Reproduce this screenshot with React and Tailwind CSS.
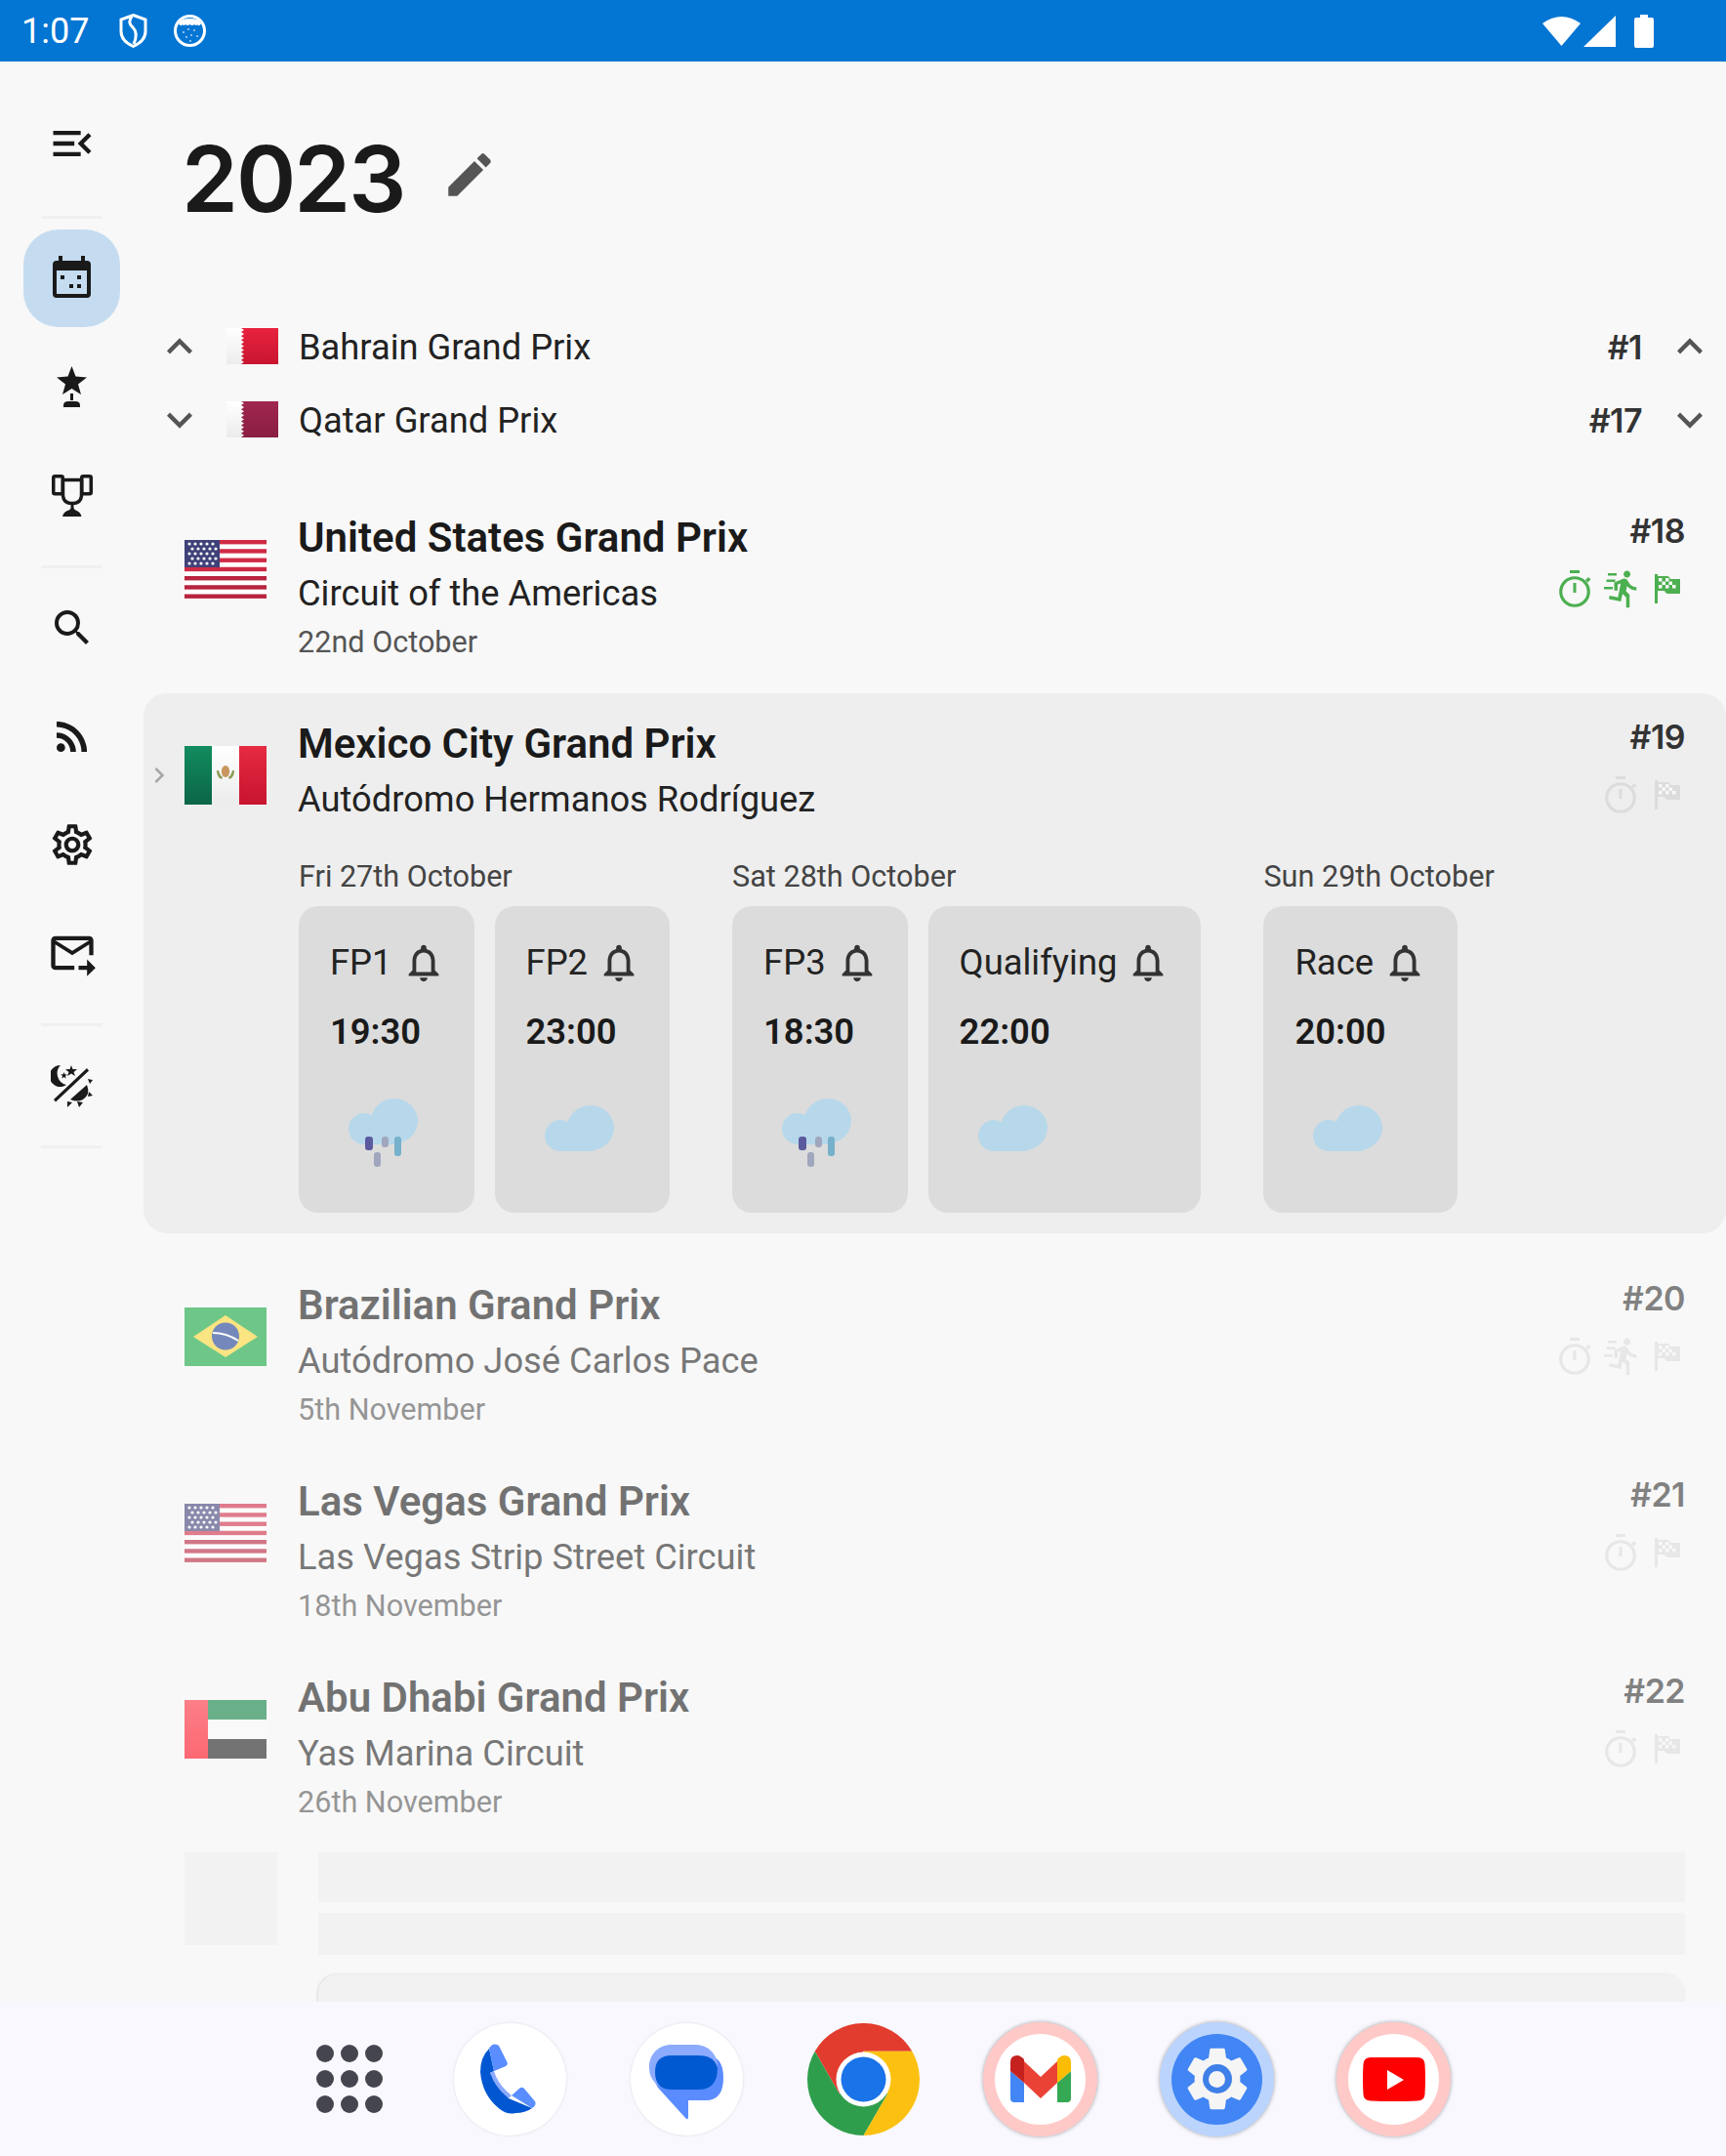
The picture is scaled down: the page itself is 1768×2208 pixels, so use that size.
import React from "react";
import {
  MdMenuOpen, MdEdit, MdExpandLess, MdExpandMore, MdChevronRight, MdSearch, MdRssFeed,
  MdOutlineSettings, MdOutlineForwardToInbox, MdOutlineNotifications, MdDirectionsRun, MdSettings,
} from "react-icons/md";

// --- flags ---
const Sheen = ({ id, from, to }) => (
  <linearGradient id={id} x1="0" y1="0" x2="0" y2="1">
    <stop offset="0" stopColor={from} />
    <stop offset="1" stopColor={to} />
  </linearGradient>
);

const UsFlag = () => (
  <svg viewBox="0 0 84 60" className="block w-[84px] h-[60px]">
    <rect width="84" height="60" fill="#fff" />
    {[0, 1, 2, 3, 4, 5, 6].map((i) => <rect key={i} y={i * 9.25} width="84" height="4.4" fill={i < 4 ? "#cf2a45" : "#b8233d"} />)}
    <rect width="36" height="28" fill="#3f4179" />
    {[4, 9, 14, 19, 24].map((y, r) =>
      [5, 11, 17, 23, 29].map((x) => <circle key={`${x}-${y}`} cx={r % 2 ? x + 3 : x} cy={y} r="1.6" fill="#fff" />)
    )}
  </svg>
);

const PennantFlag = ({ id, top, bottom }) => {
  const pts = ["0,0", "15,0"];
  for (let i = 0; i < 9; i++) pts.push(`18,${i * 4.1 + 2}`, `15,${i * 4.1 + 4.1}`);
  pts.push("0,37");
  return (
    <svg viewBox="0 0 53 37" className="block w-[53px] h-[37px]">
      <defs>
        <Sheen id={id} from={top} to={bottom} />
        <Sheen id={`${id}-w`} from="#ffffff" to="#ececec" />
      </defs>
      <rect width="53" height="37" fill={`url(#${id})`} />
      <polygon points={pts.join(" ")} fill={`url(#${id}-w)`} />
    </svg>
  );
};

const MexicoFlag = () => (
  <svg viewBox="0 0 84 60" className="block w-[84px] h-[60px]">
    <defs>
      <Sheen id="mx-g" from="#128c5e" to="#0b6547" />
      <Sheen id="mx-w" from="#ffffff" to="#ececec" />
      <Sheen id="mx-r" from="#e62a42" to="#c8142e" />
    </defs>
    <rect width="28" height="60" fill="url(#mx-g)" />
    <rect x="28" width="28" height="60" fill="url(#mx-w)" />
    <rect x="56" width="28" height="60" fill="url(#mx-r)" />
    <ellipse cx="42" cy="26" rx="4.2" ry="6" fill="#c8965e" />
    <path d="M33 25q0 7 5 9l1-2q-3-2-4-7zM51 25q0 7-5 9l-1-2q3-2 4-7z" fill="#8c9a56" />
  </svg>
);

const BrazilFlag = () => (
  <svg viewBox="0 0 84 60" className="block w-[84px] h-[60px]">
    <rect width="84" height="60" fill="#14a83f" />
    <polygon points="42,8 75,30 42,51 9,30" fill="#fdd835" />
    <circle cx="42" cy="29.500" r="14" fill="#1e3f95" />
    <path d="M29 26q14 0 26 8" stroke="#fff" strokeWidth="2" fill="none" />
  </svg>
);

const UaeFlag = () => (
  <svg viewBox="0 0 84 60" className="block w-[84px] h-[60px]">
    <defs>
      <Sheen id="ae-r" from="#ff2f3d" to="#ff0a1c" />
    </defs>
    <rect x="24" width="60" height="20" fill="#0b8140" />
    <rect x="24" y="20" width="60" height="20" fill="#fafafa" />
    <rect x="24" y="40" width="60" height="20" fill="#1c1c1c" />
    <rect width="24" height="60" fill="url(#ae-r)" />
  </svg>
);

// --- drawn icons that the packages don't have ---
const CalendarIcon = () => (
  <svg viewBox="0 0 39 43" className="w-[39px] h-[43px] -mt-[3px]" fill="#1a1a1a">
    <path d="M6 0h4v5h19V0h4v5h2a4 4 0 0 1 4 4v30a4 4 0 0 1-4 4H4a4 4 0 0 1-4-4V9a4 4 0 0 1 4-4h2zM4 15v24h31V15z" />
    <rect x="8" y="20" width="4" height="4" />
    <rect x="25" y="20" width="4" height="4" />
    <rect x="17" y="29" width="4" height="4" />
    <rect x="25" y="29" width="4" height="4" />
  </svg>
);

const StarTrophyIcon = () => (
  <svg viewBox="0 0 31 42" className="w-[31px] h-[42px]" fill="#1a1a1a">
    <polygon points="15.5,0 19.5,10.5 31,11.5 22,18.5 25,29 15.5,23 6,29 9,18.5 0,11.5 11.5,10.5" />
    <rect x="14" y="28" width="3" height="7" />
    <path d="M7 42v-2q0-4 5-4h7q5 0 5 4v2z" />
  </svg>
);

const CupIcon = () => (
  <svg viewBox="0 0 42 43" className="w-[42px] h-[43px]">
    <g fill="none" stroke="#1a1a1a" strokeWidth="3.500">
      <rect x="1.750" y="1.750" width="9.500" height="18" rx="1.500" />
      <rect x="30.750" y="1.750" width="9.500" height="18" rx="1.500" />
      <path d="M11 5.500h20M11.500 5.500v15q0 9 9.500 9t9.500-9v-15" />
    </g>
    <path d="M19.500 29h3v5q0 2 3 3 4 1.500 5 6H11q1-4.500 5-6 3.500-1 3.500-3z" fill="#1a1a1a" />
  </svg>
);

const ThemeIcon = () => (
  <svg viewBox="0 0 43 44" className="w-[43px] h-[44px]" fill="#1a1a1a">
    <path d="M10 1a11 11 0 1 0 6 20 12 12 0 0 1-6-20z" />
    <polygon points="21,1 22.5,5 27,5 23.5,8 25,12 21,9.5 17,12 18.5,8 15,5 19.5,5" />
    <polygon points="13.5,8 14.4,10.2 16.8,10.4 15,12 15.6,14.4 13.5,13 11.4,14.4 12,12 10.2,10.4 12.6,10.2" />
    <path d="M3 36 37 4l2 2.4-34 32z" />
    <path d="M20 36 37 21q4 10-4 15-6 3-13 0z" />
    <polygon points="38,15 43,16 40,20" />
    <polygon points="39,28 43,32 38,33" />
    <polygon points="27,38 33,39 29,44" />
    <polygon points="17,38 22,39 17,44" />
  </svg>
);

const TimerIcon = () => (
  <svg viewBox="0 0 34 38" className="w-[34px] h-[38px]" fill="currentColor">
    <rect x="11" y="0" width="10" height="3" />
    <circle cx="16" cy="22" r="14.250" fill="none" stroke="currentColor" strokeWidth="3.200" />
    <rect x="14.500" y="13" width="3" height="10" />
    <path d="M27 10l3-3 2.400 2.400-3 3z" />
  </svg>
);

const SprintIcon = () => (
  <span className="relative flex w-[36px] h-[38px] items-center justify-end">
    <MdDirectionsRun size={42} className="shrink-0 -mr-[6px]" />
    <svg viewBox="0 0 14 24" className="absolute left-0 top-[3px] w-[14px] h-[24px]" fill="currentColor">
      <rect x="4" y="0" width="9" height="2.500" />
      <rect x="2.500" y="6.500" width="9" height="2.500" />
      <rect x="0" y="14" width="9" height="2.500" />
    </svg>
  </span>
);

const FinishFlag = () => (
  <svg viewBox="0 0 26 30" className="w-[26px] h-[30px]">
    <path d="M0 0h3v2h10q2 0 3 3h10v15H13q-2 0-3-3H3v13H0z" fill="currentColor" />
    <g fill="#f8f8f8">
      <rect x="4" y="4" width="3.500" height="3.500" /><rect x="11" y="4" width="3.500" height="3.500" />
      <rect x="7.500" y="7.500" width="3.500" height="3.500" /><rect x="14.500" y="7.500" width="3.500" height="3.500" />
      <rect x="4" y="11" width="3.500" height="3.500" /><rect x="11" y="11" width="3.500" height="3.500" /><rect x="18" y="11" width="3.500" height="3.500" />
    </g>
  </svg>
);

const Cloud = ({ rain }) => (
  <svg viewBox="0 0 72 74" className="block w-[72px] h-[74px] ml-[18px]">
    <g transform={rain ? "" : "translate(0 7)"} fill="#b7d8ea">
      <ellipse cx="48" cy="23" rx="24" ry="23" />
      <circle cx="17" cy="31" r="16" />
      <rect x="17" y="25" width="38" height="22" rx="6" />
    </g>
    {rain && (
      <g>
        <rect x="18" y="39" width="8" height="14" rx="3" fill="#5b5a9f" />
        <rect x="35" y="39" width="7" height="11" rx="3" fill="#a0a6bd" />
        <rect x="48" y="39" width="7" height="20" rx="3" fill="#76b0cb" />
        <rect x="27" y="55" width="7" height="15" rx="3" fill="#a0a6bd" />
      </g>
    )}
  </svg>
);

// --- status bar ---
const StatusBar = () => (
  <div className="h-[63px] shrink-0 bg-[#0375d3] flex items-center pl-[22px] pr-[74px] text-white">
    <span className="text-[36px] leading-none w-[100px]">1:07</span>
    <svg viewBox="0 0 29 35" className="w-[29px] h-[35px]">
      <path d="M14.5 1.5 27 6v12q0 10-12.500 15.500Q2 28 2 18V6z" fill="none" stroke="#fff" strokeWidth="3" />
      <path d="M13 3q-5 6 1 11 6 6 1 17" fill="none" stroke="#fff" strokeWidth="3" />
    </svg>
    <svg viewBox="0 0 33 33" className="w-[33px] h-[33px] ml-[27px]">
      <circle cx="16.500" cy="16.500" r="15" fill="none" stroke="#fff" strokeWidth="3" />
      <path d="M5 9q2-5 11.500-5T28 9q-2 4-4 1-1 2-3 0-2 2-4.500 0Q14 12 12 10q-2 2-3 0-2 3-4-1z" fill="#fff" />
      {[[10, 18], [15, 15], [21, 16], [13, 23], [18, 21], [24, 22], [17, 27]].map(([x, y]) => <circle key={`${x}${y}`} cx={x} cy={y} r="1" fill="#fff" opacity=".7" />)}
    </svg>
    <div className="flex-1" />
    <svg viewBox="0 0 39 31" className="w-[39px] h-[31px]"><path d="M0 8Q19.500-6 39 8L19.500 31z" fill="#fff" /></svg>
    <svg viewBox="0 0 33 32" className="w-[33px] h-[32px] ml-[3px]"><polygon points="33,0 33,32 0,32" fill="#fff" /></svg>
    <svg viewBox="0 0 20 34" className="w-[20px] h-[34px] ml-[19px]"><path d="M6 0h8v3h4a2 2 0 0 1 2 2v27a2 2 0 0 1-2 2H2a2 2 0 0 1-2-2V5a2 2 0 0 1 2-2h4z" fill="#fff" /></svg>
  </div>
);

// --- sidebar ---
const Divider = ({ className = "" }) => <div className={`w-[63px] h-[3px] bg-[#f0f0f0] ${className}`} />;
const NavItem = ({ children, active, className = "" }) => (
  <div className={`w-[99px] h-[100px] shrink-0 flex items-center justify-center rounded-[36px] text-[#1a1a1a] ${active ? "bg-[#c5dcf0]" : ""} ${className}`}>{children}</div>
);

const Sidebar = () => (
  <div className="w-[147px] shrink-0 flex flex-col items-center pt-[34px]">
    <NavItem><MdMenuOpen size={52} /></NavItem>
    <Divider className="mt-[24px]" />
    <NavItem active className="mt-[11px]"><CalendarIcon /></NavItem>
    <NavItem className="mt-[11px]"><StarTrophyIcon /></NavItem>
    <NavItem className="mt-[11px]"><CupIcon /></NavItem>
    <Divider className="mt-[22px]" />
    <NavItem className="mt-[11px]"><MdSearch size={48} /></NavItem>
    <NavItem className="mt-[11px]"><MdRssFeed size={48} /></NavItem>
    <NavItem className="mt-[11px]"><MdOutlineSettings size={50} /></NavItem>
    <NavItem className="mt-[11px]"><MdOutlineForwardToInbox size={52} /></NavItem>
    <Divider className="mt-[22px]" />
    <NavItem className="mt-[11px]"><ThemeIcon /></NavItem>
    <Divider className="mt-[11px]" />
  </div>
);

// --- race rows ---
const numCls = "font-['Inter',sans-serif] font-semibold text-[34px] leading-none text-[#333] tracking-[-0.5px]";

const StatusIcons = ({ sprint, done }) => {
  const col = done ? "text-[#4caf50]" : "text-[#dcdcdc]";
  const cell = "w-[47px] flex justify-center";
  return (
    <div className={`flex items-center justify-end h-[40px] -mr-[5px] ${col}`}>
      <div className={cell}><TimerIcon /></div>
      {sprint && <div className={cell}><SprintIcon /></div>}
      <div className={cell}><FinishFlag /></div>
    </div>
  );
};

const RaceHeader = ({ name, circuit, date, round, flag, sprint, done, lead }) => (
  <div className="flex pr-[42px]">
    <div className="w-[42px] shrink-0 pt-[68px] pr-[10px] flex justify-center text-[#a8a8a8]">{lead}</div>
    <div className="w-[84px] shrink-0 pt-[54px]">{flag}</div>
    <div className="ml-[32px] flex-1 pt-[27px]">
      <div className="text-[42px] leading-[50px] font-semibold text-[#1a1a1a]">{name}</div>
      <div className="text-[36.3px] leading-[50px] mt-[7px] text-[#222]">{circuit}</div>
      {date && <div className="text-[30.6px] leading-[40px] mt-[5px] text-[#555]">{date}</div>}
    </div>
    <div className="pt-[28px]">
      <div className={`${numCls} text-right`}>#{round}</div>
      <div className="mt-[22px]"><StatusIcons sprint={sprint} done={done} /></div>
    </div>
  </div>
);

const Session = ({ label, time, rain, wide }) => (
  <div className={`min-w-[179px] h-[314px] rounded-[20px] bg-[#dcdcdc] pl-[32px] pt-[29px] ${wide ? "pr-[34px]" : "pr-[32px]"}`}>
    <div className="flex items-center h-[58px] text-[36.4px] text-[#222]">
      <span>{label}</span>
      <MdOutlineNotifications size={46} className="ml-[9px] -mr-[3px] text-[#333]" />
    </div>
    <div className="mt-[17px] text-[36.4px] leading-[50px] font-semibold text-[#1a1a1a]">{time}</div>
    <div className="mt-[43px]"><Cloud rain={rain} /></div>
  </div>
);

const days = [
  { day: "Fri 27th October", sessions: [{ label: "FP1", time: "19:30", rain: true }, { label: "FP2", time: "23:00" }] },
  { day: "Sat 28th October", sessions: [{ label: "FP3", time: "18:30", rain: true }, { label: "Qualifying", time: "22:00", wide: true }] },
  { day: "Sun 29th October", sessions: [{ label: "Race", time: "20:00", wide: true }] },
];

const upcoming = [
  { name: "Brazilian Grand Prix", circuit: "Autódromo José Carlos Pace", date: "5th November", round: 20, flag: <BrazilFlag />, sprint: true },
  { name: "Las Vegas Grand Prix", circuit: "Las Vegas Strip Street Circuit", date: "18th November", round: 21, flag: <UsFlag /> },
  { name: "Abu Dhabi Grand Prix", circuit: "Yas Marina Circuit", date: "26th November", round: 22, flag: <UaeFlag /> },
];

const NearbyRow = ({ dir, flag, name, round }) => {
  const Icon = dir === "up" ? MdExpandLess : MdExpandMore;
  return (
    <div className="h-[75px] flex items-center px-[11px]">
      <Icon size={52} className="text-[#555] shrink-0" />
      <div className="ml-[22px] shrink-0">{flag}</div>
      <span className="ml-[21px] pt-[3px] flex-1 text-[36.3px] text-[#222]">{name}</span>
      <span className={`pt-[2px] ${numCls}`}>#{round}</span>
      <Icon size={52} className="text-[#555] ml-[23px] shrink-0" />
    </div>
  );
};

const Dock = () => (
  <div className="h-[158px] shrink-0 bg-[#f8f8fe] flex items-center pl-[324px]">
    <div className="w-[67px] grid grid-cols-3 gap-x-[8px] gap-y-[8px]">
      {[...Array(9).keys()].map((i) => <span key={i} className="size-[18px] rounded-full bg-[#45454f]" />)}
    </div>
    {/* phone */}
    <div className="ml-[74px] size-[115px] rounded-full bg-white shadow-[0_0_3px_rgba(0,0,0,0.12)]">
      <svg viewBox="0 0 115 115">
        <path d="M36 26Q27 35 27 50q2 24 20 38 8 6 16 4 10 0 17-5L56 77 37 51l4-2z" fill="#0057d1" />
        <path d="M37 51l4-2q4 14 18 25l-3 3Q42 66 37 51z" fill="#8aa9ff" />
        <path d="M36 26q3-6 8-4 2 0 3 3l7 14q2 3-1 5l-12 5z" fill="#5a8dff" />
        <path d="M59 74l9-8q2-1 4 1l11 13q2 4-3 7z" fill="#5a8dff" />
      </svg>
    </div>
    {/* messages */}
    <div className="ml-[66px] size-[115px] rounded-full bg-white shadow-[0_0_3px_rgba(0,0,0,0.12)]">
      <svg viewBox="0 0 115 115">
        <path d="M25 58V50q0-17 18-17h34q18 0 18 23t-18 23H59v17q0 3-2 2L28 66q-3-4-3-8z" fill="#5a8cff" />
        <rect x="19" y="22" width="70" height="46" rx="22" fill="#8cabff" />
        <path d="M42 33h27q17 0 20 13 0 22-20 22H42Q25 68 25 50q0-17 17-17z" fill="#0059d1" />
      </svg>
    </div>
    {/* chrome */}
    <div className="ml-[66px] size-[115px]">
      <svg viewBox="0 0 115 115">
        <path d="M107.300 28.750A57.500 57.500 0 0 0 7.700 28.750L32.600 72 57.500 28.750Z" fill="#e23c2e" />
        <path d="M7.700 28.750A57.500 57.500 0 0 0 57.500 115L82.400 72H32.600Z" fill="#2f9e4c" />
        <path d="M57.500 115A57.500 57.500 0 0 0 107.300 28.750H57.500L82.400 72Z" fill="#fcc110" />
        <circle cx="57.500" cy="57.500" r="28" fill="#fff" />
        <circle cx="57.500" cy="57.500" r="23" fill="#1a73e8" />
      </svg>
    </div>
    {/* gmail */}
    <div className="ml-[65px] size-[117px] rounded-full bg-[#ffc9c7] shadow-[0_0_4px_rgba(0,0,0,0.35)] flex items-center justify-center">
      <div className="size-[93px] rounded-full bg-white flex items-center justify-center">
        <svg viewBox="0 0 62 48" className="w-[62px] h-[48px]">
          <path d="M0 16v28q0 4 4 4h10V28z" fill="#4285f4" />
          <path d="M62 16v28q0 4-4 4H48V28z" fill="#34a853" />
          <path d="M14 6v22l17 16 17-16V6L31 22z" fill="#ea4335" />
          <path d="M0 16V7q0-7 7-7 3 0 7 4v24z" fill="#c5221f" />
          <path d="M62 16V7q0-7-7-7-3 0-7 4v24z" fill="#fbbc04" />
        </svg>
      </div>
    </div>
    {/* settings */}
    <div className="ml-[64px] size-[117px] rounded-full bg-[#bbd4fd] shadow-[0_0_4px_rgba(0,0,0,0.35)] flex items-center justify-center">
      <div className="relative size-[93px] rounded-full bg-[#4285f4] flex items-center justify-center">
        <MdSettings size={78} className="text-[#f5f5f5]" />
        <span className="absolute size-[30px] rounded-full bg-[#3f7fe8] flex items-center justify-center">
          <span className="size-[17px] rounded-full bg-[#f5f5f5]" />
        </span>
      </div>
    </div>
    {/* youtube */}
    <div className="ml-[64px] size-[117px] rounded-full bg-[#ffc9c7] shadow-[0_0_4px_rgba(0,0,0,0.35)] flex items-center justify-center">
      <div className="size-[93px] rounded-full bg-white flex items-center justify-center">
        <svg viewBox="0 0 64 45" className="w-[64px] h-[45px]">
          <path d="M8 0h48q7 0 7.500 7 1 15 0 31-.5 6-7.500 6.500-24 1-48 0Q1 44 .5 38q-1-16 0-31Q1 0 8 0z" fill="#f00" />
          <polygon points="25,13 42,23 25,33" fill="#fff" />
        </svg>
      </div>
    </div>
  </div>
);

export default function App() {
  return (
    <div className="w-[1768px] h-[2208px] flex flex-col overflow-hidden bg-[#f8f8f8] font-['Roboto',sans-serif]">
      <StatusBar />
      <div className="flex-1 min-h-0 flex overflow-hidden">
        <Sidebar />
        <div className="flex-1 min-w-0">
          <div className="mt-[60px] h-[120px] flex items-center pl-[39px]">
            <h1 className="font-['Inter',sans-serif] font-semibold text-[93px] leading-none text-[#1a1a1a] tracking-[-2px]">2023</h1>
            <MdEdit size={58} className="ml-[38px] mt-[-8px] text-[#555]" />
          </div>

          <div className="mt-[74px]">
            <NearbyRow dir="up" name="Bahrain Grand Prix" round={1} flag={<PennantFlag id="bh" top="#e8233f" bottom="#c8152f" />} />
            <NearbyRow dir="down" name="Qatar Grand Prix" round={17} flag={<PennantFlag id="qa" top="#a02650" bottom="#8a1e42" />} />
          </div>

          <div className="mt-[32px] h-[201px]">
            <RaceHeader name="United States Grand Prix" circuit="Circuit of the Americas" date="22nd October" round={18} flag={<UsFlag />} sprint done />
          </div>

          <div className="mt-[10px] rounded-[24px] bg-[#eeeeee] h-[553px]">
            <RaceHeader name="Mexico City Grand Prix" circuit="Autódromo Hermanos Rodríguez" round={19} flag={<MexicoFlag />} lead={<MdChevronRight size={32} />} />
            <div className="flex gap-[64px] pl-[159px] mt-[34px]">
              {days.map((d) => (
                <div key={d.day}>
                  <div className="text-[30.6px] leading-[40px] text-[#444]">{d.day}</div>
                  <div className="flex gap-[21px] mt-[10px]">
                    {d.sessions.map((s) => <Session key={s.label} {...s} />)}
                  </div>
                </div>
              ))}
            </div>
          </div>

          <div className="mt-[22px] opacity-60">
            {upcoming.map((r) => (
              <div key={r.round} className="h-[201px]"><RaceHeader {...r} /></div>
            ))}
          </div>

          <div className="mt-[9px] flex px-[42px] gap-[42px]">
            <div className="size-[95px] shrink-0 bg-[#f2f2f2]" />
            <div className="flex-1 flex flex-col">
              <div className="h-[51px] bg-[#f2f2f2]" />
              <div className="h-[43px] mt-[11px] bg-[#f2f2f2]" />
              <div className="h-[120px] mt-[20px] bg-[#f2f2f2] rounded-[20px] shadow-[-1px_0_3px_rgba(0,0,0,0.12)]" />
            </div>
          </div>
        </div>
      </div>
      <Dock />
    </div>
  );
}
